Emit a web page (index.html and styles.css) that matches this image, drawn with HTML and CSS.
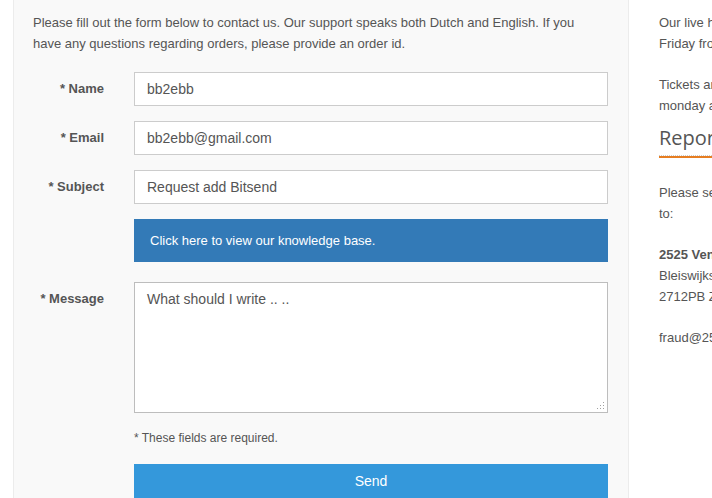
FILE: index.html
```html
<!DOCTYPE html>
<html>
<head>
<meta charset="utf-8">
<link rel="stylesheet" href="styles.css">
</head>
<body>
<div class="main">
  <p class="intro">Please fill out the form below to contact us. Our support speaks both Dutch and English. If you have any questions regarding orders, please provide an order id.</p>
  <div class="row">
    <label class="label">* Name</label>
    <div class="field"><input class="control" type="text" value="bb2ebb"></div>
  </div>
  <div class="row">
    <label class="label">* Email</label>
    <div class="field"><input class="control" type="text" value="bb2ebb@gmail.com"></div>
  </div>
  <div class="row">
    <label class="label">* Subject</label>
    <div class="field"><input class="control" type="text" value="Request add Bitsend"></div>
  </div>
  <div class="row row-kb">
    <div class="label"></div>
    <div class="field"><a class="kb" href="#">Click here to view our knowledge base.</a></div>
  </div>
  <div class="row row-msg">
    <label class="label">* Message</label>
    <div class="field field-area">
      <textarea class="control area">What should I write .. ..</textarea>
      <svg class="grip" width="7" height="7" viewBox="0 0 7 7" aria-hidden="true">
        <rect x="6" y="0" width="1" height="1"/>
        <rect x="3" y="3" width="1" height="1"/>
        <rect x="6" y="3" width="1" height="1"/>
        <rect x="0" y="6" width="1" height="1"/>
        <rect x="3" y="6" width="1" height="1"/>
        <rect x="6" y="6" width="1" height="1"/>
      </svg>
    </div>
  </div>
  <div class="offset">
    <p class="required">* These fields are required.</p>
    <button class="send" type="button">Send</button>
  </div>
</div>
<div class="side">
  <p>Our live helpdesk is available Monday to<br>Friday from 9:00 until 17:00 (CET).</p>
  <p class="before-head">Tickets are handled on working days, from<br>monday at 9:00 until friday at 17:00.</p>
  <div class="report-head"><h3 class="report-title">Report fraud</h3></div>
  <p>Please send any reports of fraud or abuse<br>to:</p>
  <p><b class="strong">2525 Ventures B.V.</b><br>Bleiswijkseweg 37<br>2712PB Zoetermeer</p>
  <p>fraud@2525ventures.com</p>
</div>
</body>
</html>
```

FILE: styles.css
```css
html, body {
  margin: 0;
  height: 100%;
  overflow: hidden;
}
body {
  display: flex;
  background: #fff;
  font-family: "Liberation Sans", Arial, sans-serif;
  font-size: 13px;
  color: #555;
}
.main {
  flex: none;
  box-sizing: border-box;
  width: 616px;
  margin-left: 13px;
  padding: 12px 20px 0 19px;
  background: #f9f9f9;
  border-left: 1px solid #ececec;
  border-right: 1px solid #ececec;
}
.intro {
  max-width: 556px;
  margin: 0 0 18px;
  line-height: 21px;
}
.row {
  display: flex;
  gap: 30px;
  margin-bottom: 15px;
}
.row-kb {
  margin-bottom: 20px;
}
.row-msg {
  margin-bottom: 0;
}
.label {
  flex: none;
  width: 71px;
  text-align: right;
  font-weight: bold;
  line-height: 34px;
  white-space: nowrap;
}
.field {
  flex: 1;
  min-width: 0;
}
.field-area {
  position: relative;
}
.control {
  display: block;
  box-sizing: border-box;
  width: 100%;
  height: 34px;
  margin: 0;
  padding: 6px 12px;
  border: 1px solid #ccc;
  border-radius: 0;
  background: #fff;
  font-family: "Liberation Sans", Arial, sans-serif;
  font-size: 14px;
  line-height: 20px;
  color: #555;
  outline: none;
}
.area {
  height: 131px;
  border-color: #bdbdbd;
  resize: none;
}
.grip {
  position: absolute;
  right: 4px;
  bottom: 4px;
  fill: #a0a0a0;
}
.kb {
  display: block;
  height: 43px;
  line-height: 43px;
  padding: 0 16px;
  background: #337ab7;
  color: #fff;
  text-decoration: none;
  font-size: 13px;
}
.offset {
  margin-left: 101px;
}
.required {
  margin: 17px 0 17px;
  font-size: 12px;
  line-height: 17px;
}
.send {
  display: block;
  width: 100%;
  margin: 0;
  padding: 7px 0 9px;
  border: 0;
  border-radius: 0;
  background: #3498db;
  color: #fff;
  font-family: "Liberation Sans", Arial, sans-serif;
  font-size: 14px;
  line-height: 20px;
}
.side {
  flex: 1;
  min-width: 0;
  padding: 12px 0 0 30px;
  line-height: 21px;
  white-space: nowrap;
  overflow: hidden;
}
.side p {
  margin: 0 0 20px;
}
.side .before-head {
  margin-bottom: 8px;
}
.report-head {
  border-bottom: 2px solid #e67e22;
  margin-bottom: 24px;
}
.report-title {
  margin: 0;
  padding-bottom: 3px;
  border-bottom: 1px dotted #ccc;
  font-family: "Open Sans", sans-serif;
  font-size: 20px;
  font-weight: 400;
  line-height: 28px;
  color: #555;
}
.strong {
  font-weight: bold;
}
```
